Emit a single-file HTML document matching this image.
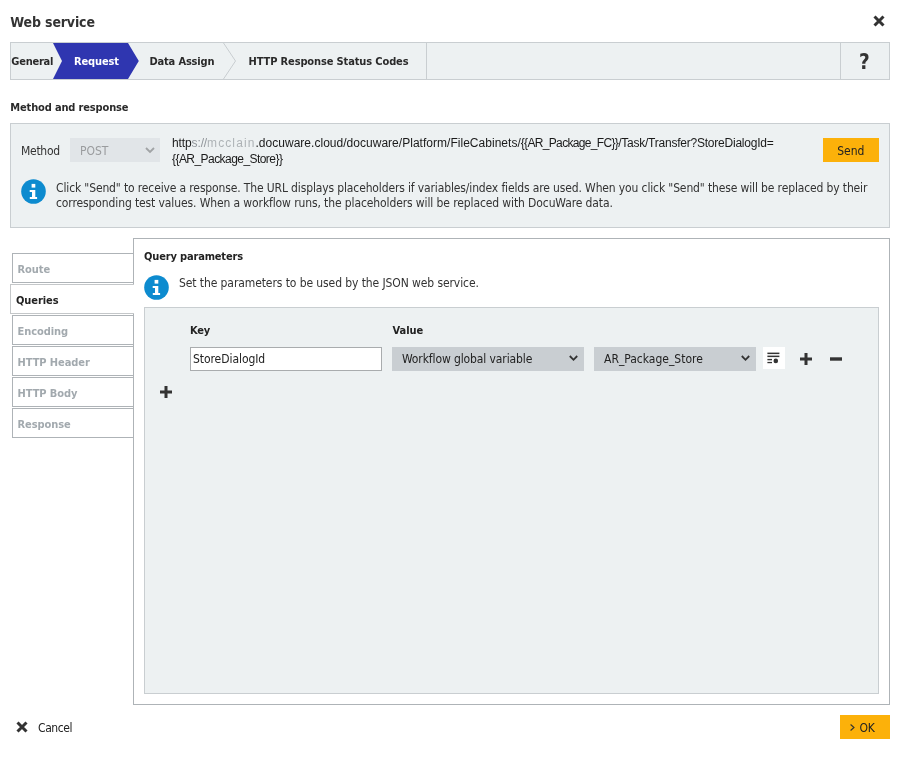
<!DOCTYPE html>
<html lang="en">
<head>
<meta charset="utf-8">
<title>Web service</title>
<style>
*{box-sizing:border-box;margin:0;padding:0}
html,body{width:900px;height:759px;background:#fff;overflow:hidden}
body{position:relative;font-family:"DejaVu Sans Condensed","Liberation Sans",sans-serif;font-size:12px;color:#333;line-height:15px}
.a{position:absolute;white-space:nowrap}
.b{font-weight:bold;font-size:11px;letter-spacing:-0.25px;color:#2a2a2a}
.r{font-size:12px;letter-spacing:-0.28px}
.box{position:absolute;background:#edf1f2;border:1px solid #c9ced1}
.tab{position:absolute;left:12px;width:122px;height:30px;background:#fff;border:1px solid #aeb3b7;font-weight:bold;font-size:11px;letter-spacing:-0.08px;color:#a2a9ae;padding:9px 0 0 4.5px;line-height:13px}
.tab.on{left:10px;width:124px;padding-left:5px;border-right:0;color:#222;border-color:#c4c7c9}
.sel{position:absolute;height:24px;background:#c9ced2}
svg{position:absolute;display:block;overflow:visible}
</style>
</head>
<body>
<div id="root" style="position:absolute;left:0;top:0;width:900px;height:759px;will-change:transform">

<!-- title -->
<div class="a" id="title" style="left:10.3px;top:13px;font-size:14px;font-weight:bold;line-height:18px;color:#333;letter-spacing:-0.15px">Web service</div>
<svg style="left:873px;top:15px" width="12" height="12" viewBox="0 0 12 12"><path d="M1.5 1.5 L10.5 10.5 M10.5 1.5 L1.5 10.5" stroke="#333" stroke-width="3" fill="none"/></svg>

<!-- wizard bar -->
<div class="box" style="left:10px;top:42px;width:880px;height:38px"></div>
<svg style="left:10px;top:42px" width="880" height="38" viewBox="0 0 880 38">
  <polygon points="43,1 118,1 128.8,19 118,37 43,37 52,19" fill="#2f36b0"/>
  <polyline points="213.5,1 225.5,19 213.5,37" fill="none" stroke="#c9ced1" stroke-width="1"/>
  <line x1="416.500" y1="1" x2="416.500" y2="37" stroke="#c9ced1" stroke-width="1"/>
  <line x1="830.500" y1="1" x2="830.500" y2="37" stroke="#c9ced1" stroke-width="1"/>
</svg>
<div class="a b" id="t1" style="left:11.3px;top:54px">General</div>
<div class="a b" id="t2" style="left:74px;top:54px;color:#fff;letter-spacing:-0.12px">Request</div>
<div class="a b" id="t3" style="left:149.5px;top:54px;letter-spacing:-0.17px">Data Assign</div>
<div class="a b" id="t4" style="left:248.5px;top:54px;letter-spacing:-0.13px">HTTP Response Status Codes</div>
<div class="a" id="help" style="left:859px;top:49px;font-size:20.5px;font-weight:bold;line-height:26px;color:#333">?</div>

<!-- method and response -->
<div class="a b" id="mr" style="left:10.3px;top:100px;letter-spacing:-0.15px">Method and response</div>
<div class="box" style="left:10px;top:123px;width:880px;height:105px"></div>
<div class="a r" id="method" style="left:21px;top:144px">Method</div>
<div class="sel" style="left:70px;top:138px;width:90px;background:#e1e5e8"></div>
<div class="a r" id="post" style="left:80px;top:144px;color:#9a9c9e;letter-spacing:0px">POST</div>
<svg style="left:145px;top:147px" width="10" height="6" viewBox="0 0 10 6"><polyline points="1,1 5,5 9,1" fill="none" stroke="#a0a3a5" stroke-width="1.8"/></svg>
<div class="a" id="url" style="left:172px;top:135px;width:640px;white-space:normal;font-family:'Liberation Sans',sans-serif;font-size:12px;line-height:16px;color:#1a1a1a;letter-spacing:-0.12px">http<span style="color:#90959a">s://</span><span id="dom" style="color:#aeb3b6;letter-spacing:1.1px">mcclain</span><span id="sa" style="letter-spacing:0.025px">.docuware.cloud/docuware/Platform/FileCabinets/</span><span id="sb" style="letter-spacing:-0.67px">{{AR_Package_FC}}</span><span id="sc" style="letter-spacing:-0.227px">/Task/Transfer?StoreDialogId=</span><br><span id="sd" style="letter-spacing:-0.555px">{{AR_Package_Store}}</span></div>
<div class="a" style="left:823px;top:138px;width:56px;height:24px;background:#fcb10a"></div>
<div class="a r" id="send" style="left:837.3px;top:144px;color:#222;letter-spacing:-0.05px">Send</div>

<svg style="left:21px;top:179px" width="25" height="25" viewBox="0 0 25 25"><circle cx="12.5" cy="12.5" r="12.3" fill="#0d8bcf"/><rect x="10.6" y="4.9" width="3.7" height="3.7" fill="#fff"/><path d="M8.7 10.9H14.3V17.9H16.1V20.1H8.8V17.9H11V13H8.7Z" fill="#fff"/></svg>
<div class="a r" id="info1" style="left:56px;top:181px;letter-spacing:-0.136px">Click "Send" to receive a response. The URL displays placeholders if variables/index fields are used. When you click "Send" these will be replaced by their</div>
<div class="a r" id="info2" style="left:56px;top:196px;letter-spacing:-0.11px">corresponding test values. When a workflow runs, the placeholders will be replaced with DocuWare data.</div>

<!-- side tabs -->
<div class="tab" style="top:253px">Route</div>
<div class="tab" style="top:315px">Encoding</div>
<div class="tab" style="top:346px">HTTP Header</div>
<div class="tab" style="top:377px">HTTP Body</div>
<div class="tab" style="top:408px">Response</div>

<!-- panel -->
<div class="a" style="left:133px;top:238px;width:757px;height:467px;background:#fff;border:1px solid #aeb3b7"></div>
<div class="tab on" style="top:284px">Queries</div>
<div class="a b" id="qp" style="left:144px;top:249px;color:#222;letter-spacing:-0.16px">Query parameters</div>
<svg style="left:144px;top:275px" width="25" height="25" viewBox="0 0 25 25"><circle cx="12.5" cy="12.5" r="12.3" fill="#0d8bcf"/><rect x="10.6" y="4.9" width="3.7" height="3.7" fill="#fff"/><path d="M8.7 10.9H14.3V17.9H16.1V20.1H8.8V17.9H11V13H8.7Z" fill="#fff"/></svg>
<div class="a r" id="set" style="left:179px;top:276px;letter-spacing:-0.09px">Set the parameters to be used by the JSON web service.</div>

<div class="box" style="left:144px;top:307px;width:735px;height:387px"></div>
<div class="a b" id="key" style="left:190px;top:323px;color:#222">Key</div>
<div class="a b" id="val" style="left:392.5px;top:323px;color:#222;letter-spacing:-0.05px">Value</div>
<div class="a" style="left:190px;top:347px;width:192px;height:24px;background:#fff;border:1px solid #a9acae"></div>
<div class="a r" id="sdi" style="left:193px;top:352px;color:#222;letter-spacing:-0.06px">StoreDialogId</div>

<div class="sel" style="left:392px;top:347px;width:192px"></div>
<div class="a r" id="wgv" style="left:402px;top:352px;color:#222;letter-spacing:-0.106px">Workflow global variable</div>
<svg style="left:569px;top:355px" width="9" height="6" viewBox="0 0 9 6"><polyline points="0.8,1 4.5,4.8 8.2,1" fill="none" stroke="#333" stroke-width="1.8"/></svg>

<div class="sel" style="left:594px;top:347px;width:162px"></div>
<div class="a r" id="aps" style="left:604px;top:352px;color:#222;letter-spacing:0px">AR_Package_Store</div>
<svg style="left:741px;top:355px" width="9" height="6" viewBox="0 0 9 6"><polyline points="0.8,1 4.5,4.8 8.2,1" fill="none" stroke="#333" stroke-width="1.8"/></svg>

<div class="a" style="left:763px;top:347px;width:22px;height:22px;background:#fff"></div>
<svg style="left:763px;top:347px" width="22" height="22" viewBox="0 0 22 22">
  <rect x="4.4" y="5.6" width="12" height="1.5" fill="#333"/>
  <rect x="4.4" y="8.6" width="12" height="1.5" fill="#333"/>
  <rect x="4.4" y="11.9" width="4.6" height="1.4" fill="#333"/>
  <rect x="4.4" y="14.9" width="4.6" height="1.3" fill="#333"/>
  <circle cx="12.8" cy="13.9" r="2.3" fill="#333"/>
</svg>
<svg style="left:800px;top:353px" width="12" height="12" viewBox="0 0 12 12"><path d="M6 0V12M0 6H12" stroke="#333" stroke-width="3" fill="none"/></svg>
<svg style="left:830px;top:353px" width="12" height="12" viewBox="0 0 12 12"><path d="M0 6H12" stroke="#333" stroke-width="3.4" fill="none"/></svg>
<svg style="left:160px;top:386px" width="12" height="12" viewBox="0 0 12 12"><path d="M6 0V12M0 6H12" stroke="#333" stroke-width="3" fill="none"/></svg>

<!-- footer -->
<svg style="left:16px;top:721px" width="12" height="12" viewBox="0 0 12 12"><path d="M1.5 1.5 L10.5 10.5 M10.5 1.5 L1.5 10.5" stroke="#333" stroke-width="3" fill="none"/></svg>
<div class="a r" id="cancel" style="left:38px;top:721px;color:#222;letter-spacing:-0.4px">Cancel</div>
<div class="a" style="left:840px;top:715px;width:50px;height:24px;background:#fcb10a"></div>
<svg style="left:850px;top:724px" width="5" height="7" viewBox="0 0 5 7"><polyline points="0.6,0.5 4,3.5 0.6,6.5" fill="none" stroke="#333" stroke-width="1.1"/></svg>
<div class="a r" id="ok" style="left:859.5px;top:721px;color:#222">OK</div>

</div>
</body>
</html>
